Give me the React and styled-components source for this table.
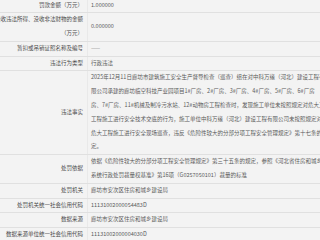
import React from "react";
import styled, { createGlobalStyle } from "styled-components";

const Global = createGlobalStyle`
  html, body { margin: 0; padding: 0; background: #f3f3f3; overflow: hidden; }
  body { font-family: "Noto Sans CJK SC", "Noto Sans", sans-serif; }
`;

const Table = styled.div`
  width: 420px;
  margin-top: -1.5px;
  background: #f3f3f3;
`;

const Row = styled.div`
  display: grid;
  grid-template-columns: 88px 1fr;
  border-bottom: 1px solid #e0e0e0;
`;

const Label = styled.div`
  display: flex;
  flex-direction: column;
  align-items: flex-end;
  justify-content: center;
  padding-right: 4px;
  border-right: 1px solid #e9e9e9;
  font-size: 5.5px;
  line-height: 13.8px;
  color: #4a4a4a;
  white-space: nowrap;
`;

const Value = styled.div`
  display: flex;
  flex-direction: column;
  justify-content: ${(p) => (p.$top ? "flex-start" : "center")};
  padding-left: 3px;
  font-size: 5.5px;
  line-height: 13.8px;
  color: #5a5a5a;
  white-space: nowrap;
  overflow: hidden;
`;

const Line = styled.span`
  display: block;
`;

const rows = [
  { label: ["罚款金额（万元）"], value: ["1.000000"] },
  { label: ["没收违法所得、没收非法财物的金额", "（万元）"], value: ["0.000000"] },
  { label: ["暂扣或吊销证照名称及编号"], value: ["——"] },
  { label: ["违法行为类型"], value: ["行政违法"] },
  {
    label: ["违法事实"],
    top: true,
    value: [
      "2025年12月11日廊坊市建筑施工安全生产督导检查（巡查）组在对中科万缘（河北）建设工程有限公司",
      "限公司承建的廊坊临空科技产业园项目1#厂房、2#厂房、3#厂房、4#厂房、5#厂房、6#厂房",
      "房、7#厂房、11#机械及制冷污水站、12#动物房工程检查时，发现施工单位未按照规定对危大工程",
      "工程施工进行安全技术交底的行为，施工单位中科万缘（河北）建设工程有限公司未按照规定对",
      "危大工程施工进行安全现场巡查，违反《危险性较大的分部分项工程安全管理规定》第十七条的规",
      "定。",
    ],
  },
  {
    label: ["处罚依据"],
    top: true,
    value: [
      "依据《危险性较大的分部分项工程安全管理规定》第三十五条的规定，参照《河北省住房和城乡建设",
      "系统行政处罚裁量权基准》第16项（G0257050101）裁量的标准",
    ],
  },
  { label: ["处罚机关"], value: ["廊坊市安次区住房和城乡建设局"] },
  { label: ["处罚机关统一社会信用代码"], value: ["11131002000054483D"] },
  { label: ["数据来源"], value: ["廊坊市安次区住房和城乡建设局"] },
  { label: ["数据来源单位统一社会信用代码"], value: ["11131002000004030D"] },
];

export default function App() {
  return (
    <>
      <Global />
      <Table>
        {rows.map((r, i) => (
          <Row key={i}>
            <Label>
              {r.label.map((l, j) => (
                <Line key={j}>{l}</Line>
              ))}
            </Label>
            <Value $top={r.top}>
              {r.value.map((v, j) => (
                <Line key={j}>{v}</Line>
              ))}
            </Value>
          </Row>
        ))}
      </Table>
    </>
  );
}
